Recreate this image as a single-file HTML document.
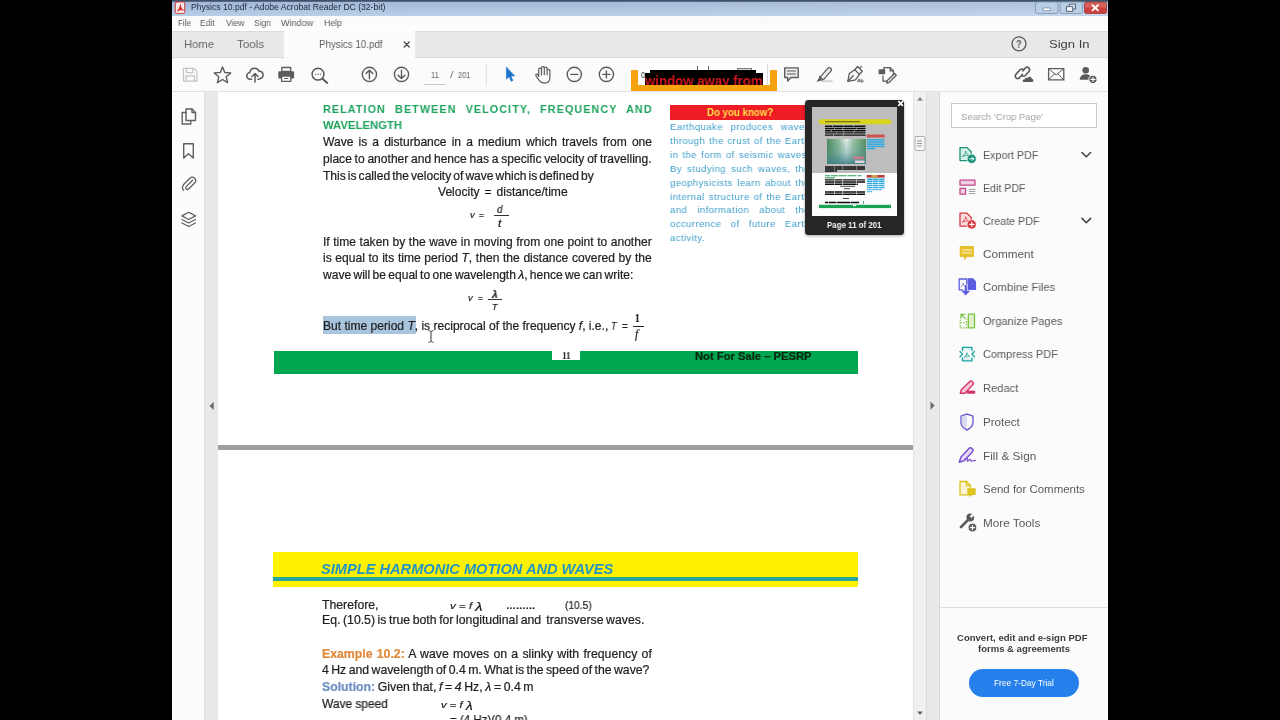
<!DOCTYPE html>
<html lang="en">
<head>
<meta charset="utf-8">
<title>Physics 10.pdf - Adobe Acrobat Reader DC (32-bit)</title>
<style>
html,body{margin:0;padding:0;}
body{width:1280px;height:720px;overflow:hidden;position:relative;background:#000;font-family:"Liberation Sans",sans-serif;}
.a{position:absolute;}
.t{position:absolute;white-space:nowrap;transform-origin:0 0;will-change:transform;}
svg{position:absolute;overflow:visible;}
i{font-style:italic;}
</style>
</head>
<body>
<!-- application window -->
<div class="a" style="left:172px;top:0;width:936px;height:720px;background:#fff;"></div>

<!-- title bar -->
<div class="a" style="left:172px;top:0;width:936px;height:16px;background:linear-gradient(90deg,rgba(255,255,255,0) 0%,rgba(255,255,255,.04) 50%,rgba(255,255,255,.16) 100%),linear-gradient(180deg,#a1b6d5 0%,#a8bfdc 45%,#b8cfe8 100%);"></div>
<div class="a" style="left:172px;top:0;width:936px;height:1.500px;background:linear-gradient(180deg,#34475a,#5d738c);"></div>
<!-- menu bar -->
<div class="a" style="left:172px;top:16px;width:936px;height:15px;background:linear-gradient(180deg,#f7faf9,#fefefe);"></div>
<!-- tab bar -->
<div class="a" style="left:172px;top:31px;width:936px;height:27px;background:#e9e9e9;border-top:1px solid #dcdcdc;box-sizing:border-box;"></div>
<div class="a" style="left:284px;top:31px;width:131px;height:27px;background:#fcfcfc;"></div>
<div class="a" style="left:172px;top:57px;width:112px;height:1px;background:#d6d6d6;"></div>
<div class="a" style="left:415px;top:57px;width:693px;height:1px;background:#d9d9d9;"></div>
<!-- toolbar -->
<div class="a" style="left:172px;top:58px;width:936px;height:34px;background:#fbfbfb;"></div>
<div class="a" style="left:172px;top:90.800px;width:936px;height:1.200px;background:#e0e0e0;"></div>

<!-- left nav strip / gutters -->
<div class="a" style="left:172px;top:92px;width:32px;height:628px;background:#fcfcfc;"></div>
<div class="a" style="left:204px;top:92px;width:14px;height:628px;background:#e9e9e9;border-left:1px solid #dedede;box-sizing:border-box;"></div>
<div class="a" style="left:218px;top:92px;width:695px;height:628px;background:#fff;"></div>
<div class="a" style="left:912.500px;top:92px;width:14px;height:628px;background:#f0f0f0;border-left:1px solid #e3e3e3;box-sizing:border-box;"></div>
<div class="a" style="left:926px;top:92px;width:14px;height:628px;background:#e9e9e9;border-left:1px solid #dcdcdc;border-right:1px solid #d6d6d6;box-sizing:border-box;"></div>
<div class="a" style="left:940px;top:92px;width:168px;height:628px;background:#fbfbfb;"></div>


<!-- ===== document page 1 graphics ===== -->
<div class="a" style="left:322.7px;top:316.3px;width:93.3px;height:18px;background:#a9c5de;"></div>
<div class="a" style="left:494px;top:214.8px;width:15px;height:1px;background:#333;"></div>
<div class="a" style="left:488.3px;top:298.8px;width:14.2px;height:1px;background:#333;"></div>
<div class="a" style="left:632.5px;top:325.8px;width:11.7px;height:1px;background:#222;"></div>
<div class="a" style="left:273.8px;top:350.7px;width:584px;height:23px;background:#00a650;"></div>
<div class="a" style="left:551.9px;top:350.7px;width:27.8px;height:9px;background:#fff;"></div>
<div class="a" style="left:670px;top:104.7px;width:140px;height:15.7px;background:#ee1c25;"></div>
<!-- page separator -->
<div class="a" style="left:218px;top:445px;width:695px;height:5.2px;background:#9e9e9e;"></div>
<!-- page 2 header band -->
<div class="a" style="left:273.3px;top:552px;width:584.5px;height:34.8px;background:#fff200;"></div>
<div class="a" style="left:273.3px;top:577px;width:584.5px;height:4.3px;background:#2aa39a;"></div>
<svg width="1280" height="720" viewBox="0 0 1280 720" style="left:0;top:0" fill="none" stroke-linecap="round" stroke-linejoin="round">
<rect x="175.3" y="2" width="9.4" height="11.4" rx="1" fill="#fbeaea" stroke="#c9302c" stroke-width="0.9"/>
<path d="M177.2 10.8c1.5-1.8 2.6-4 2.8-6.2c.1-.8 1-.7 .9 .1c-.2 2.2 1 4.200 2.800 5.100c.7 .4 .3 1-.5 .8c-2-.5-4.100-.2-5.600 .9c-.6 .4-.9-.1-.4-.7z" fill="#d9322d" stroke="none"/>
<rect x="1035.5" y="2" width="22.5" height="11.5" rx="2" fill="#b9cfe6" stroke="#7f94ad" stroke-width="0.8"/>
<rect x="1060" y="2" width="22.5" height="11.5" rx="2" fill="#b9cfe6" stroke="#7f94ad" stroke-width="0.8"/>
<rect x="1084.5" y="2" width="22" height="11.5" rx="2" fill="#d9605a" stroke="#8c3a3a" stroke-width="0.8"/>
<rect x="1084.5" y="7.6" width="22" height="5.900" rx="2" fill="#c9413c" stroke="none"/>
<rect x="1043.3" y="8" width="7" height="2.600" fill="#fff" stroke="#5b6f88" stroke-width="0.6"/>
<rect x="1069.5" y="4.2" width="6" height="4.800" fill="#dfe9f4" stroke="#45556b" stroke-width="0.9"/>
<rect x="1066.800" y="6.6" width="6" height="4.800" fill="#eef3f9" stroke="#45556b" stroke-width="0.9"/>
<path d="M1092.500 5.200l5.400 5.200M1097.900 5.200l-5.400 5.200" stroke="#fff" stroke-width="1.900"/>
<path d="M404.200 42l5 5M409.200 42l-5 5" stroke="#555" stroke-width="1.500"/>
<circle cx="1019" cy="43.800" r="7" stroke="#5a5a5a" stroke-width="1.300"/>
<g stroke="#c3c3c3" stroke-width="1.200"><path d="M183.500 68.400h10.600l2.900 2.900v9.800h-13.500z"/><path d="M186.500 68.400v4.300h6.300v-4.300"/><path d="M186 81v-5.200h8.500v5.200"/></g>
<polygon points="222.50,66.90 224.79,72.44 230.77,72.91 226.21,76.81 227.61,82.64 222.50,79.50 217.39,82.64 218.79,76.81 214.23,72.91 220.21,72.44" stroke="#5b5b5b" stroke-width="1.400"/>
<g stroke="#5b5b5b" stroke-width="1.500"><path d="M251.600 79.300h-1.200a3.400 3.400 0 0 1-.5-6.800a4.700 4.700 0 0 1 9.100-1.200a3.700 3.700 0 0 1 1.500 7.200q-.8 .7-2.600 .8"/><path d="M255 82v-8.300M252 76.500l3-3l3 3"/></g>
<g><rect x="281.800" y="67.500" width="8.900" height="4" stroke="#5b5b5b" stroke-width="1.300"/><rect x="278.300" y="71.300" width="15.800" height="7.200" rx="1.200" fill="#5b5b5b"/><rect x="281.600" y="76" width="9.200" height="5.300" fill="#fbfbfb" stroke="#5b5b5b" stroke-width="1.300"/><path d="M284.500 78.500h3.500" stroke="#5b5b5b" stroke-width="1"/></g>
<g stroke="#5b5b5b"><circle cx="318" cy="74.200" r="5.900" stroke-width="1.500"/><path d="M322.500 78.700l4.800 4.200" stroke-width="2"/><path d="M315.500 74.300h.1M318 74.300h.1M320.500 74.300h.1" stroke-width="1.300"/></g>
<g stroke="#5b5b5b" stroke-width="1.400"><circle cx="369.400" cy="74.400" r="7.100"/><path d="M369.400 78.700v-8.200M366 73.600l3.400-3.400l3.400 3.400"/></g>
<g stroke="#5b5b5b" stroke-width="1.400"><circle cx="401.500" cy="74.400" r="7.100"/><path d="M401.500 70.100v8.200M398.100 75.200l3.400 3.400l3.400-3.400"/></g>
<path d="M424.400 84.500h21.200" stroke="#c9c9c9" stroke-width="1"/>
<path d="M486.300 64.500v20.500" stroke="#dedede" stroke-width="1"/>
<path d="M506.400 67.300v11.800l2.700-2.400l2.100 4.500l1.700-.8l-2.100-4.400h3.600z" fill="#1c73c9" stroke="#1c73c9" stroke-width="0.600"/>
<g stroke="#5b5b5b" stroke-width="1.200"><path d="M538.700 76.500v-7a1.400 1.400 0 0 1 2.800 0v5.300v-6.800a1.400 1.400 0 0 1 2.800 0v6.600v-6a1.400 1.400 0 0 1 2.800 0v6.200v-4a1.400 1.400 0 0 1 2.800 0v6.700c0 3.500-2.200 5.600-5.600 5.600c-2.600 0-3.900-.9-5.200-2.700l-3.100-4.500c-.9-1.400 .8-2.500 1.900-1.300z"/></g>
<g stroke="#5b5b5b" stroke-width="1.400"><circle cx="574.300" cy="74.400" r="7.100"/><path d="M570.800 74.400h7"/></g>
<g stroke="#5b5b5b" stroke-width="1.400"><circle cx="606.400" cy="74.400" r="7.100"/><path d="M602.900 74.400h7M606.400 70.900v7"/></g>
<g stroke="#5b5b5b" stroke-width="1.400"><path d="M784.700 67.900h13.500v9.600h-7.300l-3.200 3.500v-3.500h-3z" fill="#ececec"/><path d="M787.300 71h8.300M787.300 74h8.300" stroke-width="1"/></g>
<g><path d="M822 78.200l7.300-8.400" stroke="#5b5b5b" stroke-width="5.400"/><path d="M822 78.200l7.300-8.400" stroke="#ececec" stroke-width="2.900"/><path d="M819.400 76.300l3.800 3.300" stroke="#5b5b5b" stroke-width="1.200"/><path d="M819.300 77.300l3 2.700l-5.800 2z" fill="#5b5b5b"/><path d="M822.500 81.300h9.300" stroke="#d4d4d4" stroke-width="2"/></g>
<g stroke="#5b5b5b" stroke-width="1.300"><path d="M847.800 81.300l1.500-7.800l5.500-3.800l4.600 4.700l-3.900 5.400z"/><path d="M848.100 81l5.200-5.200"/><path d="M854.800 69.700l2.800-3.200l4.700 4.700l-2.900 3.100"/><path d="M859.800 68.200l1.800-1.800" stroke-width="1.100"/><path d="M857.600 82l1.300-3.200l1.300 3.200M858.100 81h1.600M861.200 79.200v2.800M861.200 81c.4-1.300 2.200-1.400 2.200 .2c0 1-1.500 1.100-2.200 .5" stroke-width="0.800"/></g>
<g stroke="#5b5b5b" stroke-width="1.300"><path d="M884 70.500v-2.800h6.200l3.200 3.200v3"/><path d="M890.200 67.700v3.200h3.200"/><path d="M883 76v5.200h4.500"/><rect x="879.300" y="70" width="5.200" height="3.700" fill="#5b5b5b"/><path d="M894.500 73.500l1.800 1.800l-7.300 7.300l-2.300 .5l.5-2.300z" fill="#eee"/></g>
<g stroke="#5b5b5b" stroke-width="1.600"><path d="M1022.500 74.300l-3.100 3.600a2.500 2.500 0 0 1-3.700-3.300l4.300-4.900a2.500 2.500 0 0 1 3.700 .1"/><path d="M1021.800 75.500a2.500 2.500 0 0 0 3.600 0l3.700-4.300a2.500 2.500 0 0 0-3.700-3.300l-2.600 3"/></g>
<path d="M1023.600 82.100h8.700a1.700 1.700 0 0 0-.4-3.300a2.500 2.500 0 0 0-4.500-.9a2.100 2.100 0 0 0-2.900 1.700a1.300 1.300 0 0 0-.9 2.500z" fill="#5b5b5b"/>
<g stroke="#5b5b5b" stroke-width="1.300"><rect x="1048.600" y="68.700" width="15.200" height="11.200"/><path d="M1048.600 68.700l7.600 6.300l7.600-6.300M1048.600 79.900l5.900-6M1063.800 79.900l-5.900-6" stroke-width="1"/></g>
<g fill="#5b5b5b"><circle cx="1085.700" cy="70.300" r="3.300"/><path d="M1079.700 79.700c.3-3.700 2.600-5.500 6-5.500c3.400 0 5.700 1.800 6 5.500z"/><circle cx="1093" cy="79.400" r="4.200" stroke="#fbfbfb" stroke-width="1"/><path d="M1091 79.400h4M1093 77.400v4" stroke="#fff" stroke-width="1.100"/></g>
<g stroke="#5f5f5f" stroke-width="1.400"><path d="M186 112v-3h6l3.500 3.500v8h-9.500z" /><path d="M192 109v3.500h3.500"/><path d="M186 112.500h-3.800v11.500h8.500v-3.300"/></g>
<path d="M183.700 143.700h9.600v14.300l-4.800-4.300l-4.800 4.300z" stroke="#5f5f5f" stroke-width="1.400"/>
<path d="M192.600 180.200l-6.400 6.400a1.700 1.700 0 0 0 2.400 2.400l6-6a3.300 3.300 0 0 0-4.700-4.700l-6.500 6.500a4.600 4.600 0 0 0 .3 5.600" stroke="#5f5f5f" stroke-width="1.300"/>
<g stroke="#5f5f5f" stroke-width="1.300"><path d="M188.700 212.300l6.800 3.600l-6.800 3.600l-6.800-3.600z"/><path d="M182 219.500l6.700 3.500l6.700-3.500"/><path d="M182 223l6.700 3.500l6.700-3.500"/></g>
<path d="M213.700 401.800v8.200l-4.200-4.100z" fill="#6b6b6b"/>
<path d="M930.500 401.500v8.200l4.200-4.100z" fill="#6b6b6b"/>
<path d="M917.200 100.500l2.800-3.300l2.800 3.300z" fill="#747474"/>
<path d="M917.100 711.600l2.900 3.400l2.900-3.400z" fill="#666"/>
<rect x="915" y="136.500" width="10" height="14" rx="1" fill="#f4f4f4" stroke="#a9a9a9" stroke-width="0.9"/>
<path d="M917.500 141h4M917.500 143.500h4M917.500 146h4" stroke="#8b8b8b" stroke-width="0.900"/>
</svg>
<div class="a" style="left:951px;top:103.3px;width:145.800px;height:25px;box-sizing:border-box;border:1px solid #c9c9c9;background:#fff;"></div>
<div class="a" style="left:940px;top:606.500px;width:168px;height:1px;background:#dedede;"></div>
<div class="a" style="left:969px;top:668.500px;width:109.600px;height:28.800px;border-radius:14.400px;background:#2680eb;"></div>
<svg width="1280" height="720" viewBox="0 0 1280 720" style="left:0;top:0" fill="none" stroke-linecap="round" stroke-linejoin="round">
<path d="M1082 152.5l4.300 4.300l4.300-4.300" stroke="#3f3f3f" stroke-width="1.500"/>
<path d="M1082 218.4l4.300 4.300l4.300-4.300" stroke="#3f3f3f" stroke-width="1.500"/>
<g stroke="#1a9277" stroke-width="1.300"><path d="M960 147.600h7l4.200 4.200v8.800h-11.200z" fill="#d8f0e9"/><path d="M962.500 156.500c2-1.500 3-3.600 3.200-5.500c.2 2 1.600 3.700 3.300 4.500c-2.200-.3-4.500 0-6.500 1z" stroke-width="0.800"/><circle cx="971.700" cy="158.800" r="4.700" fill="#1a9277" stroke="#fbfbfb" stroke-width="0.800"/><path d="M969.700 158.800h4M972.200 157.100l1.700 1.700l-1.700 1.700" stroke="#fff" stroke-width="1"/></g>
<g stroke="#c0478c" stroke-width="1.300"><rect x="960" y="180.200" width="15" height="5" fill="#f3cfe2"/><rect x="960" y="188.400" width="5.600" height="5.800" fill="#f3cfe2"/><path d="M969.200 189.500h5.800M969.200 191.500h5.800M969.200 193.600h5.800" stroke="#8a8a8a" stroke-width="0.800"/></g>
<g stroke="#d7373f" stroke-width="1.300"><path d="M960 213.200h7l4.200 4.200v8.800h-11.200z" fill="#fbdcdf"/><path d="M962.500 222.200c2-1.500 3-3.600 3.200-5.500c.2 2 1.600 3.700 3.300 4.500c-2.200-.3-4.500 0-6.500 1z" stroke-width="0.800"/><circle cx="971.700" cy="224.400" r="4.700" fill="#d7373f" stroke="#fbfbfb" stroke-width="0.800"/><path d="M969.700 224.400h4.200M971.800 222.300v4.200" stroke="#fff" stroke-width="1.200"/></g>
<path d="M960.500 246h12.600a.8 .8 0 0 1 .8 .8v9.500a.8 .8 0 0 1-.8 .8h-6.100l-3 3.300v-3.300h-3.500a.8 .8 0 0 1-.8-.8v-9.500a.8 .8 0 0 1 .8-.8z" fill="#e6c12c"/><path d="M962.500 250h8.800M962.500 253h8.800" stroke="#fff8d8" stroke-width="1.200"/>
<g stroke="#5c5ce0" stroke-width="1.300"><path d="M966.800 284v-5h-7.600v10.800h3.500" /><path d="M961 287c1.300-1 2-2.400 2.200-3.700c.1 1.400 1 2.500 2.200 3" stroke-width="0.800"/><path d="M968.300 278.800h4.300l2.800 2.800v7.800h-7.100z" fill="#5c5ce0"/><path d="M965.800 286v6" stroke-width="2.200"/><path d="M962 291h7.600l-3.800 4z" fill="#5c5ce0" stroke-width="0.600"/></g>
<g stroke="#7cc243" stroke-width="1.300"><rect x="968.300" y="314.200" width="6.200" height="13.600" fill="#dff0cd"/><path d="M960.200 319.500v8.300h6.300v-8.300" stroke-dasharray="1.500 1.300" stroke-linecap="butt"/><path d="M960.200 322.500h6" stroke-dasharray="1.500 1.300" stroke-linecap="butt" stroke-width="0.900"/><path d="M961 314.300h3.800M961 314.300v3.800M961 314.300l4.300 4.300"/></g>
<g stroke="#14a3a0" stroke-width="1.300"><path d="M962.500 350.500v-3.200h9.500v3.200M972 357.800v3h-9.500v-3" fill="#dff4f3"/><path d="M960 351.500l2.600 2.600l-2.600 2.600M974.500 351.500l-2.600 2.600l2.600 2.600"/><path d="M964.500 357c1.500-1.200 2.300-2.800 2.500-4.300c.2 1.600 1.200 2.900 2.600 3.600c-1.800-.3-3.500 0-5.100 .7z" stroke-width="0.800"/></g>
<g stroke="#d6336c" stroke-width="1.400"><path d="M960.300 393.300l1-3.500l8.500-8.300a1.600 1.600 0 0 1 2.300 0l.8 .8a1.600 1.600 0 0 1 0 2.300l-8 8.700z" fill="#f6c9d9"/><rect x="967.300" y="391" width="7.500" height="2.300" fill="#d6336c" stroke-width="0.800"/></g>
<g stroke="#6b5fd0" stroke-width="1.400"><path d="M967 414l6 2.200v5.800c0 4-2.600 6.300-6 8c-3.400-1.700-6-4-6-8v-5.800z" fill="#fbfbfb"/><path d="M967 414.800v14.500c-2.800-1.500-5.200-3.600-5.200-7.200v-5.400z" fill="#dcdcee" stroke="none"/></g>
<g stroke="#7b4fd1" stroke-width="1.500"><path d="M959.300 462.300l1.700-5.200l8-8.700a2 2 0 0 1 2.900 0l.5 .5a2 2 0 0 1 0 2.900l-8 8.800z" fill="#e7dcf7"/><path d="M964 460.300c1.500-1.800 3-2.500 3.300-1.600c.3 .9-.7 2.300 .2 2.500c.9 .2 1.700-2.200 2.700-1.800c.8 .3 .2 1.800 1.100 1.800c.9 0 1.500-.8 4.200-.9" stroke-width="1.200"/></g>
<g stroke="#dcc21c" stroke-width="1.300"><path d="M960 481.500h6.500l4 4v9.300h-10.500z" fill="#fbf4d2"/><path d="M966.500 481.500v4h4"/><path d="M968 489h7v5.300h-3.200l-1.800 1.800v-1.800h-2z" fill="#e2c61e"/></g>
<g><path d="M961 527l7.600-7.600" stroke="#5a5a5a" stroke-width="2.700"/><circle cx="970.300" cy="517.500" r="3.900" fill="#5a5a5a"/><path d="M970.600 517.200l4-4" stroke="#fbfbfb" stroke-width="2.500" stroke-linecap="butt"/><circle cx="972.500" cy="527.600" r="4.500" fill="#5a5a5a" stroke="#fbfbfb" stroke-width="1"/><path d="M970.400 527.600h4.200M972.500 525.500v4.200" stroke="#fff" stroke-width="1.200"/></g>
</svg>
<div class="t" style="left:191.30px;top:0px;font:normal normal 8.60px/14.000px 'Liberation Sans', sans-serif;color:#1c2740;transform:scaleX(0.9978);">Physics 10.pdf - Adobe Acrobat Reader DC (32-bit)</div>
<div class="t" style="left:177.50px;top:16px;font:normal normal 9.20px/14.000px 'Liberation Sans', sans-serif;color:#5a5a5a;transform:scaleX(0.8776);">File</div>
<div class="t" style="left:200.40px;top:16px;font:normal normal 9.20px/14.000px 'Liberation Sans', sans-serif;color:#5a5a5a;transform:scaleX(0.9215);">Edit</div>
<div class="t" style="left:225.60px;top:16px;font:normal normal 9.20px/14.000px 'Liberation Sans', sans-serif;color:#5a5a5a;transform:scaleX(0.9316);">View</div>
<div class="t" style="left:253.70px;top:16px;font:normal normal 9.20px/14.000px 'Liberation Sans', sans-serif;color:#5a5a5a;transform:scaleX(0.9135);">Sign</div>
<div class="t" style="left:281.30px;top:16px;font:normal normal 9.20px/14.000px 'Liberation Sans', sans-serif;color:#5a5a5a;transform:scaleX(0.9851);">Window</div>
<div class="t" style="left:323.50px;top:16px;font:normal normal 9.20px/14.000px 'Liberation Sans', sans-serif;color:#5a5a5a;transform:scaleX(0.9521);">Help</div>
<div class="t" style="left:184.20px;top:35px;font:normal normal 11.80px/18.000px 'Liberation Sans', sans-serif;color:#666;transform:scaleX(0.9533);">Home</div>
<div class="t" style="left:236.60px;top:35px;font:normal normal 11.80px/18.000px 'Liberation Sans', sans-serif;color:#666;transform:scaleX(0.9801);">Tools</div>
<div class="t" style="left:318.70px;top:36px;font:normal normal 10.80px/16.000px 'Liberation Sans', sans-serif;color:#5c5c5c;transform:scaleX(0.9043);">Physics 10.pdf</div>
<div class="t" style="left:1048.50px;top:35px;font:normal normal 11.80px/18.000px 'Liberation Sans', sans-serif;color:#404040;transform:scaleX(1.1025);">Sign In</div>
<div class="t" style="left:431.00px;top:68px;font:normal normal 8.80px/14.000px 'Liberation Sans', sans-serif;color:#666;transform:scaleX(0.8752);">11</div>
<div class="t" style="left:450.00px;top:68px;font:normal normal 8.80px/14.000px 'Liberation Sans', sans-serif;color:#777;transform:scaleX(1.4268);">/</div>
<div class="t" style="left:458.10px;top:68px;font:normal normal 8.80px/14.000px 'Liberation Sans', sans-serif;color:#666;transform:scaleX(0.8306);">201</div>
<div class="t" style="left:323.00px;top:101px;font:normal bold 11.40px/16.000px 'Liberation Sans', sans-serif;color:#1da35b;letter-spacing:1.10px;word-spacing:5.39px;transform:scaleX(0.9500);">RELATION BETWEEN VELOCITY, FREQUENCY AND</div>
<div class="t" style="left:323.00px;top:117px;font:normal bold 11.40px/16.000px 'Liberation Sans', sans-serif;color:#1da35b;transform:scaleX(0.9933);">WAVELENGTH</div>
<div class="t" style="left:323.00px;top:133px;font:normal normal 11.90px/18.000px 'Liberation Sans', sans-serif;color:#1f1f1f;word-spacing:1.73px;transform:scaleX(1.0150);-webkit-text-stroke:0.22px;">Wave is a disturbance in a medium which travels from one</div>
<div class="t" style="left:323.00px;top:150px;font:normal normal 11.90px/18.000px 'Liberation Sans', sans-serif;color:#1f1f1f;word-spacing:-0.61px;transform:scaleX(1.0150);-webkit-text-stroke:0.22px;">place to another and hence has a specific velocity of travelling.</div>
<div class="t" style="left:323.00px;top:167px;font:normal normal 11.90px/18.000px 'Liberation Sans', sans-serif;color:#1f1f1f;word-spacing:-1.29px;transform:scaleX(1.0150);-webkit-text-stroke:0.22px;">This is called the velocity of wave which is defined by</div>
<div class="t" style="left:438.30px;top:183px;font:normal normal 11.90px/18.000px 'Liberation Sans', sans-serif;color:#1f1f1f;word-spacing:1.55px;transform:scaleX(1.0150);-webkit-text-stroke:0.22px;">Velocity = distance/time</div>
<div class="t" style="left:469.80px;top:207px;font:italic normal 9.50px/15.000px 'Liberation Sans', sans-serif;color:#1f1f1f;transform:scaleX(0.9684);-webkit-text-stroke:0.22px;">v</div>
<div class="t" style="left:479.00px;top:207px;font:normal normal 9.50px/15.000px 'Liberation Sans', sans-serif;color:#1f1f1f;transform:scaleX(0.8989);-webkit-text-stroke:0.22px;">=</div>
<div class="t" style="left:497.30px;top:201px;font:italic normal 10.80px/16.000px 'Liberation Sans', sans-serif;color:#1f1f1f;transform:scaleX(0.8977);-webkit-text-stroke:0.22px;">d</div>
<div class="t" style="left:497.70px;top:216px;font:italic normal 10.20px/15.000px 'Liberation Sans', sans-serif;color:#1f1f1f;transform:scaleX(1.1604);-webkit-text-stroke:0.22px;">t</div>
<div class="t" style="left:323.00px;top:233px;font:normal normal 11.90px/18.000px 'Liberation Sans', sans-serif;color:#1f1f1f;word-spacing:0.16px;transform:scaleX(1.0150);-webkit-text-stroke:0.22px;">If time taken by the wave in moving from one point to another</div>
<div class="t" style="left:323.00px;top:249px;font:normal normal 11.90px/18.000px 'Liberation Sans', sans-serif;color:#1f1f1f;word-spacing:0.27px;transform:scaleX(1.0150);-webkit-text-stroke:0.22px;">is equal to its time period <i>T</i>, then the distance covered by the</div>
<div class="t" style="left:323.00px;top:266px;font:normal normal 11.90px/18.000px 'Liberation Sans', sans-serif;color:#1f1f1f;word-spacing:-1.04px;transform:scaleX(1.0150);-webkit-text-stroke:0.22px;">wave will be equal to one wavelength <i>λ</i>, hence we can write:</div>
<div class="t" style="left:467.70px;top:290px;font:italic normal 9.50px/15.000px 'Liberation Sans', sans-serif;color:#1f1f1f;transform:scaleX(0.9684);-webkit-text-stroke:0.22px;">v</div>
<div class="t" style="left:478.00px;top:290px;font:normal normal 9.50px/15.000px 'Liberation Sans', sans-serif;color:#1f1f1f;transform:scaleX(0.8989);-webkit-text-stroke:0.22px;">=</div>
<div class="t" style="left:492.20px;top:286px;font:italic bold 11.40px/16.000px 'Liberation Sans', sans-serif;color:#1f1f1f;transform:scaleX(0.8828);-webkit-text-stroke:0.22px;">λ</div>
<div class="t" style="left:492.30px;top:300px;font:italic normal 8.60px/14.000px 'Liberation Sans', sans-serif;color:#1f1f1f;transform:scaleX(1.0286);-webkit-text-stroke:0.22px;">T</div>
<div class="t" style="left:323.00px;top:317px;font:normal normal 11.90px/18.000px 'Liberation Sans', sans-serif;color:#1f1f1f;word-spacing:-0.05px;transform:scaleX(1.0150);-webkit-text-stroke:0.22px;">But time period <i>T</i>, is reciprocal of the frequency <i>f</i>, i.e.,</div>
<div class="t" style="left:610.60px;top:318px;font:italic normal 11.40px/16.000px 'Liberation Sans', sans-serif;color:#1f1f1f;transform:scaleX(0.8036);-webkit-text-stroke:0.22px;">T</div>
<div class="t" style="left:621.80px;top:318px;font:normal normal 10.50px/16.000px 'Liberation Sans', sans-serif;color:#1f1f1f;transform:scaleX(0.9445);-webkit-text-stroke:0.22px;">=</div>
<div class="t" style="left:635.00px;top:309px;font:normal bold 12.30px/18.000px 'Liberation Serif', serif;color:#1f1f1f;transform:scaleX(0.7472);-webkit-text-stroke:0.22px;">1</div>
<div class="t" style="left:635.40px;top:326px;font:italic normal 11.60px/17.000px 'Liberation Serif', serif;color:#1f1f1f;-webkit-text-stroke:0.22px;">f</div>
<div class="t" style="left:561.60px;top:348px;font:normal bold 9.80px/15.000px 'Liberation Serif', serif;color:#111;transform:scaleX(0.9282);">11</div>
<div class="t" style="left:695.30px;top:348px;font:normal bold 10.70px/16.000px 'Liberation Sans', sans-serif;color:#08280f;transform:scaleX(1.0499);-webkit-text-stroke:0.2px;">Not For Sale – PESRP</div>
<div class="t" style="left:706.90px;top:105px;font:normal bold 10.00px/15.000px 'Liberation Sans', sans-serif;color:#ffe14a;transform:scaleX(0.9686);">Do you know?</div>
<div class="t" style="left:670.10px;top:119px;font:normal normal 9.80px/15.000px 'Liberation Sans', sans-serif;color:#3d9fca;letter-spacing:0.45px;word-spacing:4.68px;transform:scaleX(0.9700);">Earthquake produces waves</div>
<div class="t" style="left:670.10px;top:133px;font:normal normal 9.80px/15.000px 'Liberation Sans', sans-serif;color:#3d9fca;letter-spacing:0.45px;word-spacing:0.76px;transform:scaleX(0.9700);">through the crust of the Earth</div>
<div class="t" style="left:670.10px;top:147px;font:normal normal 9.80px/15.000px 'Liberation Sans', sans-serif;color:#3d9fca;letter-spacing:0.45px;word-spacing:1.08px;transform:scaleX(0.9700);">in the form of seismic waves.</div>
<div class="t" style="left:670.10px;top:161px;font:normal normal 9.80px/15.000px 'Liberation Sans', sans-serif;color:#3d9fca;letter-spacing:0.45px;word-spacing:2.12px;transform:scaleX(0.9700);">By studying such waves, the</div>
<div class="t" style="left:670.10px;top:175px;font:normal normal 9.80px/15.000px 'Liberation Sans', sans-serif;color:#3d9fca;letter-spacing:0.45px;word-spacing:1.42px;transform:scaleX(0.9700);">geophysicists learn about the</div>
<div class="t" style="left:670.10px;top:189px;font:normal normal 9.80px/15.000px 'Liberation Sans', sans-serif;color:#3d9fca;letter-spacing:0.45px;word-spacing:0.98px;transform:scaleX(0.9700);">internal structure of the Earth</div>
<div class="t" style="left:670.10px;top:202px;font:normal normal 9.80px/15.000px 'Liberation Sans', sans-serif;color:#3d9fca;letter-spacing:0.45px;word-spacing:7.28px;transform:scaleX(0.9700);">and information about the</div>
<div class="t" style="left:670.10px;top:216px;font:normal normal 9.80px/15.000px 'Liberation Sans', sans-serif;color:#3d9fca;letter-spacing:0.45px;word-spacing:6.42px;transform:scaleX(0.9700);">occurrence of future Earth</div>
<div class="t" style="left:670.10px;top:230px;font:normal normal 9.80px/15.000px 'Liberation Sans', sans-serif;color:#3d9fca;letter-spacing:0.45px;transform:scaleX(0.9700);">activity.</div>
<div class="t" style="left:321.30px;top:559px;font:italic bold 14.40px/20.000px 'Liberation Sans', sans-serif;color:#2494c4;transform:scaleX(1.0156);">SIMPLE HARMONIC MOTION AND WAVES</div>
<div class="t" style="left:321.50px;top:596px;font:normal normal 12.10px/18.000px 'Liberation Sans', sans-serif;color:#1f1f1f;transform:scaleX(1.0126);-webkit-text-stroke:0.22px;">Therefore,</div>
<div class="t" style="left:449.70px;top:598px;font:normal normal 9.80px/15.000px 'Liberation Sans', sans-serif;color:#1f1f1f;transform:scaleX(1.1768);-webkit-text-stroke:0.22px;"><i>v</i> = <i>f</i>&nbsp;<i style="font-size:12.5px;position:relative;top:2.4px">λ</i></div>
<div class="t" style="left:506.00px;top:599px;font:normal bold 9.00px/14.000px 'Liberation Sans', sans-serif;color:#1f1f1f;transform:scaleX(1.0889);-webkit-text-stroke:0.22px;">………</div>
<div class="t" style="left:565.40px;top:597px;font:normal normal 10.80px/16.000px 'Liberation Sans', sans-serif;color:#1f1f1f;transform:scaleX(0.9497);-webkit-text-stroke:0.22px;">(10.5)</div>
<div class="t" style="left:321.50px;top:611px;font:normal normal 12.10px/18.000px 'Liberation Sans', sans-serif;color:#1f1f1f;word-spacing:-0.85px;transform:scaleX(1.0150);-webkit-text-stroke:0.22px;">Eq. (10.5) is true both for longitudinal and&nbsp; transverse waves.</div>
<div class="t" style="left:321.50px;top:645px;font:normal normal 12.10px/18.000px 'Liberation Sans', sans-serif;color:#1f1f1f;word-spacing:0.83px;transform:scaleX(1.0150);-webkit-text-stroke:0.22px;"><b style="color:#e08a3c">Example 10.2:</b> A wave moves on a slinky with frequency of</div>
<div class="t" style="left:321.50px;top:661px;font:normal normal 12.10px/18.000px 'Liberation Sans', sans-serif;color:#1f1f1f;word-spacing:-0.99px;transform:scaleX(1.0150);-webkit-text-stroke:0.22px;">4 Hz and wavelength of 0.4 m. What is the speed of the wave?</div>
<div class="t" style="left:321.50px;top:678px;font:normal normal 12.10px/18.000px 'Liberation Sans', sans-serif;color:#1f1f1f;word-spacing:-0.79px;transform:scaleX(1.0150);-webkit-text-stroke:0.22px;"><b style="color:#6f8fc4">Solution:</b> Given that, <i>f</i> = <i>4</i> Hz, <i>λ</i> = 0.4 m</div>
<div class="t" style="left:321.50px;top:695px;font:normal normal 12.10px/18.000px 'Liberation Sans', sans-serif;color:#1f1f1f;transform:scaleX(0.9883);-webkit-text-stroke:0.22px;">Wave speed</div>
<div class="t" style="left:440.90px;top:697px;font:normal normal 9.80px/15.000px 'Liberation Sans', sans-serif;color:#1f1f1f;transform:scaleX(1.1515);-webkit-text-stroke:0.22px;"><i>v</i> = <i>f</i>&nbsp;<i style="font-size:12.5px;position:relative;top:2.4px">λ</i></div>
<div class="t" style="left:449.70px;top:711px;font:normal normal 12.10px/18.000px 'Liberation Sans', sans-serif;color:#1f1f1f;transform:scaleX(0.9528);-webkit-text-stroke:0.22px;">= (4 Hz)(0.4 m)</div>
<div class="t" style="left:1016.20px;top:36px;font:normal bold 10.50px/16.000px 'Liberation Sans', sans-serif;color:#5a5a5a;transform:scaleX(0.8720);">?</div>
<div class="t" style="left:960.70px;top:109px;font:normal normal 9.80px/15.000px 'Liberation Sans', sans-serif;color:#a3a3a3;transform:scaleX(0.9722);">Search 'Crop Page'</div>
<div class="t" style="left:982.70px;top:147px;font:normal normal 11.40px/16.000px 'Liberation Sans', sans-serif;color:#5a5a5a;transform:scaleX(0.9393);">Export PDF</div>
<div class="t" style="left:982.70px;top:180px;font:normal normal 11.40px/16.000px 'Liberation Sans', sans-serif;color:#5a5a5a;transform:scaleX(0.9325);">Edit PDF</div>
<div class="t" style="left:982.70px;top:213px;font:normal normal 11.40px/16.000px 'Liberation Sans', sans-serif;color:#5a5a5a;transform:scaleX(0.9395);">Create PDF</div>
<div class="t" style="left:982.70px;top:246px;font:normal normal 11.40px/16.000px 'Liberation Sans', sans-serif;color:#5a5a5a;transform:scaleX(1.0289);">Comment</div>
<div class="t" style="left:982.70px;top:279px;font:normal normal 11.40px/16.000px 'Liberation Sans', sans-serif;color:#5a5a5a;transform:scaleX(0.9930);">Combine Files</div>
<div class="t" style="left:982.70px;top:313px;font:normal normal 11.40px/16.000px 'Liberation Sans', sans-serif;color:#5a5a5a;transform:scaleX(0.9708);">Organize Pages</div>
<div class="t" style="left:982.70px;top:346px;font:normal normal 11.40px/16.000px 'Liberation Sans', sans-serif;color:#5a5a5a;transform:scaleX(0.9607);">Compress PDF</div>
<div class="t" style="left:982.70px;top:380px;font:normal normal 11.40px/16.000px 'Liberation Sans', sans-serif;color:#5a5a5a;transform:scaleX(0.9780);">Redact</div>
<div class="t" style="left:982.70px;top:414px;font:normal normal 11.40px/16.000px 'Liberation Sans', sans-serif;color:#5a5a5a;transform:scaleX(1.0196);">Protect</div>
<div class="t" style="left:982.70px;top:448px;font:normal normal 11.40px/16.000px 'Liberation Sans', sans-serif;color:#5a5a5a;transform:scaleX(1.0394);">Fill &amp; Sign</div>
<div class="t" style="left:982.70px;top:481px;font:normal normal 11.40px/16.000px 'Liberation Sans', sans-serif;color:#5a5a5a;transform:scaleX(1.0050);">Send for Comments</div>
<div class="t" style="left:982.70px;top:515px;font:normal normal 11.40px/16.000px 'Liberation Sans', sans-serif;color:#5a5a5a;transform:scaleX(1.0321);">More Tools</div>
<div class="t" style="left:957.20px;top:630px;font:normal bold 9.40px/15.000px 'Liberation Sans', sans-serif;color:#3c3c3c;transform:scaleX(1.0184);">Convert, edit and e-sign PDF</div>
<div class="t" style="left:977.70px;top:641px;font:normal bold 9.40px/15.000px 'Liberation Sans', sans-serif;color:#3c3c3c;transform:scaleX(1.0148);">forms &amp; agreements</div>
<div class="t" style="left:994.00px;top:675px;font:normal normal 9.60px/15.000px 'Liberation Sans', sans-serif;color:#fff;transform:scaleX(0.8680);z-index:3;">Free 7-Day Trial</div>
<div class="t" style="left:645.20px;top:71px;font:normal bold 14.20px/20.000px 'Liberation Sans', sans-serif;color:#d0161b;transform:scaleX(0.9323);z-index:2;">window away from</div>
<div class="t" style="left:640.60px;top:68px;font:normal normal 8.50px/14.000px 'Liberation Sans', sans-serif;color:#333;transform:scaleX(0.8871);z-index:2;">0</div>
<div class="t" style="left:826.50px;top:218px;font:normal bold 8.80px/14.000px 'Liberation Sans', sans-serif;color:#f4f4f4;transform:scaleX(0.8987);z-index:6;">Page 11 of 201</div>
<div class="a" style="left:639px;top:63px;width:131px;height:23px;background:#fefefe;"></div>
<div class="a" style="left:767px;top:64px;width:1px;height:21px;background:#d9d9d9;"></div>
<div class="a" style="left:696.500px;top:66px;width:1px;height:4.500px;background:#666;"></div>
<div class="a" style="left:707.500px;top:66px;width:1px;height:4.500px;background:#666;"></div>
<div class="a" style="left:736.500px;top:67.700px;width:15px;height:4px;box-sizing:border-box;border:1px solid #777;background:#ddd;"></div>
<div class="a" style="left:650px;top:70px;width:106px;height:4px;background:#000;"></div>
<div class="a" style="left:644.700px;top:72.500px;width:118.800px;height:12.700px;background:#000;"></div>
<div class="a" style="left:631.300px;top:70.200px;width:146px;height:21px;box-sizing:border-box;border:solid #f7a20f;border-width:0 7.500px 6.200px 7.700px;z-index:3;"></div>
<svg width="8" height="13" viewBox="0 0 8 13" style="left:427.300px;top:330px" fill="none"><path d="M1.500 .7c1.300 0 2.200 .4 2.500 1.100c.3-.7 1.200-1.100 2.500-1.100M4 1.800v9.400M1.500 12.300c1.300 0 2.200-.4 2.500-1.100c.3 .7 1.200 1.100 2.500 1.100" stroke="#222" stroke-width="0.900"/></svg>
<div class="a" style="left:805.400px;top:99.800px;width:99px;height:135.600px;border-radius:3.500px;background:#262626;box-shadow:0 1px 3px rgba(0,0,0,.35);z-index:4;"></div>
<div class="a" style="left:812.400px;top:107px;width:84.600px;height:65.500px;background:#bdbdbd;z-index:4;"></div>
<div class="a" style="left:812.400px;top:172.500px;width:84.600px;height:43.400px;background:#fdfdfd;z-index:4;"></div>
<svg width="100" height="140" viewBox="805 99 100 140" style="left:805px;top:99px;z-index:5" fill="none">
<rect x="818.800" y="119.200" width="72.500" height="5" rx="2" fill="#d9d41f"/>
<path d="M825 121.700h35" stroke="#5a5a14" stroke-width="1.100"/>
<path d="M825 126.3h40.5" stroke="#0c0c0c" stroke-width="1.400" stroke-dasharray="7 .6 11 .5 9 .6 12"/>
<path d="M825 128.5h40.5" stroke="#0c0c0c" stroke-width="1.400" stroke-dasharray="9 .5 8 .6 13 .5 9"/>
<path d="M825 130.7h40.5" stroke="#0c0c0c" stroke-width="1.400" stroke-dasharray="6 .6 12 .5 10 .5 11"/>
<path d="M825 132.9h40.5" stroke="#0c0c0c" stroke-width="1.400" stroke-dasharray="11 .5 7 .6 9 .5 12"/>
<path d="M825 135.1h40.5" stroke="#0c0c0c" stroke-width="1.400" stroke-dasharray="8 .6 10 .5 22"/>
<defs><linearGradient id="wf" x1="0" x2="1" y1="0" y2="0"><stop offset="0" stop-color="#4d8a58"/><stop offset=".3" stop-color="#8fbb9b"/><stop offset=".5" stop-color="#e3efe8"/><stop offset=".68" stop-color="#9cc3a6"/><stop offset="1" stop-color="#558f5e"/></linearGradient><linearGradient id="wf2" x1="0" x2="0" y1="0" y2="1"><stop offset="0" stop-color="#3f7f86" stop-opacity="0"/><stop offset=".55" stop-color="#4d8d96" stop-opacity=".35"/><stop offset="1" stop-color="#3d7f8a" stop-opacity=".9"/></linearGradient></defs>
<rect x="827" y="139" width="39" height="25" fill="url(#wf)"/>
<rect x="827" y="139" width="39" height="25" fill="url(#wf2)"/>
<rect x="853" y="156.500" width="11.500" height="2.800" fill="#c7808d"/>
<rect x="855" y="160.500" width="9.500" height="2.500" fill="#e1d3dc"/>
<rect x="866.700" y="134.500" width="18" height="3" fill="#c9534f"/>
<path d="M867 139.8h17.500" stroke="#2fa8e0" stroke-width="1.500"/>
<path d="M867 142.0h17.500" stroke="#2fa8e0" stroke-width="1.500"/>
<path d="M867 144.2h17.500" stroke="#2fa8e0" stroke-width="1.500"/>
<path d="M867 146.4h17.500" stroke="#2fa8e0" stroke-width="1.500"/>
<path d="M867 148.600h8" stroke="#2fa8e0" stroke-width="1.500"/>
<path d="M825 167.0h40" stroke="#0c0c0c" stroke-width="1.350" stroke-dasharray="9 .5 8 .6 13 .5 9"/>
<path d="M825 169.0h40" stroke="#0c0c0c" stroke-width="1.350" stroke-dasharray="9 .5 8 .6 13 .5 9"/>
<path d="M825 171.0h12" stroke="#0c0c0c" stroke-width="1.350" stroke-dasharray="9 .5 8 .6 13 .5 9"/>
<path d="M825 175.800h40" stroke="#2f9e5b" stroke-width="1.100" stroke-dasharray="5 .8 7 .8 8 1 9 1 4"/>
<path d="M825 177.800h10" stroke="#2f9e5b" stroke-width="1.100"/>
<path d="M825 179.8h40" stroke="#0c0c0c" stroke-width="1.350" stroke-dasharray="9 .5 8 .6 13 .5 9"/>
<path d="M825 182.0h40" stroke="#0c0c0c" stroke-width="1.350" stroke-dasharray="9 .5 8 .6 13 .5 9"/>
<path d="M825 184.2h33" stroke="#0c0c0c" stroke-width="1.350" stroke-dasharray="9 .5 8 .6 13 .5 9"/>
<path d="M840 186.300h15M844 188.700h6" stroke="#333" stroke-width="0.900"/>
<path d="M825 192.0h40" stroke="#0c0c0c" stroke-width="1.350" stroke-dasharray="9 .5 8 .6 13 .5 9"/>
<path d="M825 194.2h40" stroke="#0c0c0c" stroke-width="1.350" stroke-dasharray="9 .5 8 .6 13 .5 9"/>
<path d="M843 198.500h6" stroke="#333" stroke-width="0.900"/>
<path d="M825 202.500h34" stroke="#0c0c0c" stroke-width="1.350" stroke-dasharray="3 .5 8 .6 13 .5 9"/>
<path d="M863.500 201v3" stroke="#3a8f55" stroke-width="0.800"/>
<rect x="866.700" y="175" width="18" height="2.600" fill="#b53c3c"/><rect x="871.500" y="175" width="6" height="2.600" fill="#d0a050"/>
<path d="M867 179.2h17.500" stroke="#2fa8e0" stroke-width="1.400" stroke-dasharray="5 .4 6 .5 6"/>
<path d="M867 181.3h17.500" stroke="#2fa8e0" stroke-width="1.400" stroke-dasharray="5 .4 6 .5 6"/>
<path d="M867 183.4h17.500" stroke="#2fa8e0" stroke-width="1.400" stroke-dasharray="5 .4 6 .5 6"/>
<path d="M867 185.5h17.500" stroke="#2fa8e0" stroke-width="1.400" stroke-dasharray="5 .4 6 .5 6"/>
<path d="M867 187.6h17.500" stroke="#2fa8e0" stroke-width="1.400" stroke-dasharray="5 .4 6 .5 6"/>
<path d="M867 189.700h15M867 191.700h5" stroke="#2fa8e0" stroke-width="0.900"/>
<rect x="819" y="204.800" width="72" height="3.300" fill="#17a455"/>
<rect x="853" y="204.800" width="3" height="1.300" fill="#e9f5ee"/>
<path d="M898.300 101.200l4.600 4.600M902.900 101.200l-4.600 4.600" stroke="#fff" stroke-width="1.700"/>
</svg>
</body>
</html>
